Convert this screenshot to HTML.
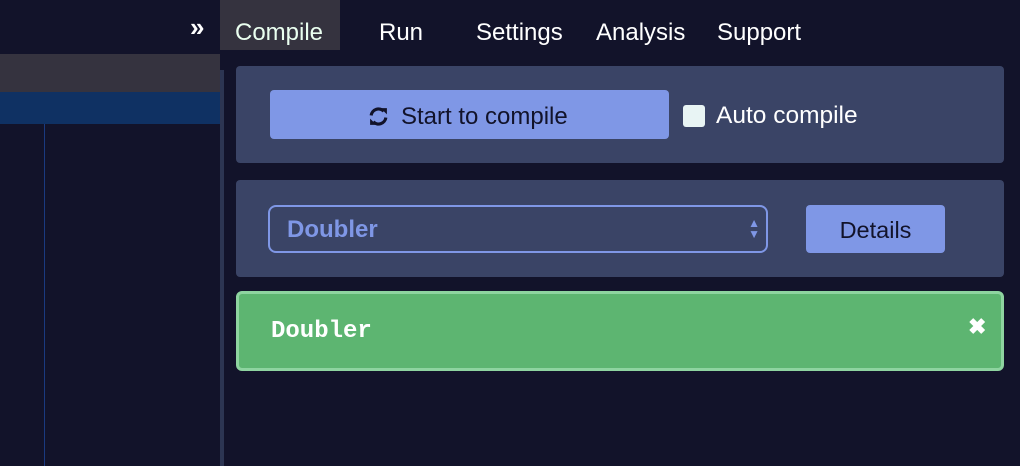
<!DOCTYPE html>
<html><head><style>
body{margin:0;width:1020px;height:466px;background:#12132a;font-family:"Liberation Sans",sans-serif;position:relative;overflow:hidden}
div{position:absolute;box-sizing:border-box}
.tab{top:19px;font-size:24px;color:#fff}
</style></head><body>
<div style="left:0;top:54px;width:220px;height:38px;background:#35333f"></div>
<div style="left:0;top:92px;width:220px;height:32px;background:#0f3163"></div>
<div style="left:44px;top:124px;width:1px;height:342px;background:#1a3a80"></div>
<div style="left:220px;top:70px;width:4px;height:396px;background:#2c3552"></div>
<div style="left:190px;top:12px;color:#fff;font-size:26px;font-weight:bold">»</div>
<div style="left:220px;top:0;width:120px;height:50px;background:#35333f"></div>
<div class="tab" style="left:235px;color:#eafff0">Compile</div>
<div class="tab" style="left:379px">Run</div>
<div class="tab" style="left:476px">Settings</div>
<div class="tab" style="left:596px">Analysis</div>
<div class="tab" style="left:717px">Support</div>
<div style="left:236px;top:66px;width:768px;height:97px;background:#3a4466;border-radius:4px"></div>
<div style="left:270px;top:90px;width:399px;height:49px;background:#7f97e6;border-radius:4px"></div>
<svg style="position:absolute;left:368px;top:106px" width="21" height="21" viewBox="0 0 20 20"><g fill="none" stroke="#12132a" stroke-width="3"><path d="M3 9 A7 7 0 0 1 15 5"/><path d="M17 11 A7 7 0 0 1 5 15"/></g><path d="M12 2 L18 2 L18 8 Z" fill="#12132a"/><path d="M8 18 L2 18 L2 12 Z" fill="#12132a"/></svg>
<div style="left:401px;top:103px;color:#12132a;font-size:24px">Start to compile</div>
<div style="left:683px;top:105px;width:22px;height:22px;background:#e8f4f4;border-radius:3px"></div>
<div style="left:716px;top:102px;color:#fff;font-size:24.5px">Auto compile</div>
<div style="left:236px;top:180px;width:768px;height:97px;background:#3a4466;border-radius:4px"></div>
<div style="left:268px;top:205px;width:500px;height:48px;border:2px solid #7f97e6;border-radius:8px;color:#7f97e6;font-weight:bold;font-size:24px;line-height:46px;padding-left:17px">Doubler<span style="position:absolute;right:6px;top:0;font-size:12px;line-height:11px;padding-top:11px">▲<br>▼</span></div>
<div style="left:806px;top:205px;width:139px;height:48px;background:#7f97e6;border-radius:4px;color:#12132a;font-size:23.5px;line-height:50px;text-align:center">Details</div>
<div style="left:236px;top:291px;width:768px;height:80px;background:#5db571;border:3px solid #8ed4a0;border-radius:6px"></div>
<div style="left:271px;top:318px;color:#fff;font-family:'Liberation Mono',monospace;font-weight:bold;font-size:24px">Doubler</div>
<div style="left:968px;top:314px;color:#fff;font-size:22px;font-weight:bold">✖</div>
</body></html>
